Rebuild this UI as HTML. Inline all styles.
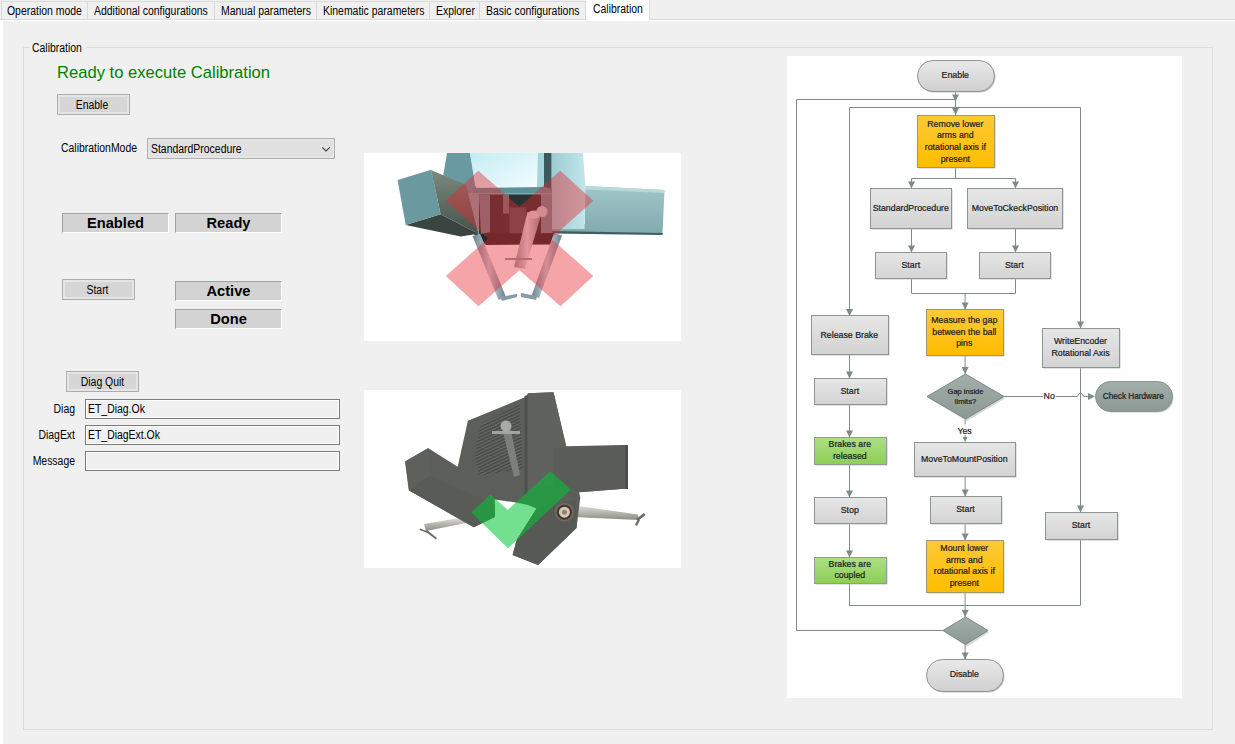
<!DOCTYPE html>
<html><head><meta charset="utf-8">
<style>
*{margin:0;padding:0;box-sizing:border-box}
html,body{width:1235px;height:744px;overflow:hidden;background:#f0f0f0;font-family:"Liberation Sans",sans-serif;color:#000}
.a{position:absolute}
.t{position:absolute;white-space:nowrap;font-size:12px;line-height:14px;transform:scaleX(.87);transform-origin:0 0}
.t[style*="center"]{transform-origin:50% 0}
.t[style*="right"]{transform-origin:100% 0}
.tab{position:absolute;top:1px;height:18px;border-top:1px solid #d9d9d9;border-left:1px solid #d9d9d9;background:#f0f0f0}
.btn{position:absolute;border:1px solid #adadad;background:#d6d6d6;box-shadow:inset 0 0 0 2px #e5e5e5}
.lbl3d{position:absolute;background:#d3d3d3;border-top:1px solid #a0a0a0;border-left:1px solid #a0a0a0;border-right:1px solid #fff;border-bottom:1px solid #fff;font-weight:bold;font-size:14.67px;text-align:center;line-height:19px}
.tb{position:absolute;left:85px;width:255px;height:20px;border:1px solid #7a7a7a;background:#f0f0f0;box-shadow:inset 0 0 0 1px #fff}
</style></head><body>
<!-- tabs -->
<div class="a" style="left:0;top:19px;width:1235px;height:1px;background:#d9d9d9"></div>
<div class="a" style="left:0;top:20px;width:1235px;height:1px;background:#fff"></div>
<div class="a" style="left:0;top:20px;width:3px;height:724px;background:#fff"></div>
<div class="tab" style="left:1px;width:87px"></div>
<div class="tab" style="left:87px;width:128px"></div>
<div class="tab" style="left:214px;width:103px"></div>
<div class="tab" style="left:316px;width:114px"></div>
<div class="tab" style="left:429px;width:51px"></div>
<div class="tab" style="left:479px;width:107px;border-right:1px solid #d9d9d9"></div>
<div class="a" style="left:649px;top:0;width:1px;height:19px;background:#d9d9d9"></div>
<div class="a" style="left:586px;top:0;width:63px;height:21px;background:#fff"></div>
<div class="t" style="left:7px;top:4px">Operation mode</div>
<div class="t" style="left:94px;top:4px">Additional configurations</div>
<div class="t" style="left:221px;top:4px">Manual parameters</div>
<div class="t" style="left:323px;top:4px">Kinematic parameters</div>
<div class="t" style="left:436px;top:4px">Explorer</div>
<div class="t" style="left:486px;top:4px">Basic configurations</div>
<div class="t" style="left:593px;top:2px">Calibration</div>

<!-- group box -->
<div class="a" style="left:23px;top:47px;width:1190px;height:683px;border:1px solid #dcdcdc"></div>
<div class="a" style="left:30px;top:40px;width:56px;height:14px;background:#f0f0f0"></div>
<div class="t" style="left:31.5px;top:41px">Calibration</div>

<div class="a" style="left:57px;top:63px;font-size:16.6px;color:#008000;white-space:nowrap;line-height:19px">Ready to execute Calibration</div>
<div class="btn" style="left:57px;top:94px;width:73px;height:21px"></div>
<div class="t" style="left:56px;top:98px;width:72px;text-align:center">Enable</div>

<div class="t" style="left:61px;top:141px">CalibrationMode</div>
<div class="a" style="left:147px;top:138px;width:188px;height:21px;border:1px solid #adadad;background:#e1e1e1;box-shadow:inset 0 0 0 1px #e8e8e8"></div>
<div class="t" style="left:151px;top:142px">StandardProcedure</div>
<svg class="a" style="left:318px;top:142px" width="16" height="12"><path d="M4.2 5.3 L8 8.9 L11.8 5.3" fill="none" stroke="#404040" stroke-width="1.1"/></svg>

<div class="lbl3d" style="left:62px;top:213px;width:107px;height:20px">Enabled</div>
<div class="lbl3d" style="left:175px;top:213px;width:107px;height:20px">Ready</div>

<div class="btn" style="left:62px;top:279px;width:73px;height:21px"></div>
<div class="t" style="left:61px;top:283px;width:73px;text-align:center">Start</div>
<div class="lbl3d" style="left:175px;top:281px;width:107px;height:20px">Active</div>
<div class="lbl3d" style="left:175px;top:309px;width:107px;height:20px">Done</div>

<div class="btn" style="left:66px;top:371px;width:73px;height:21px"></div>
<div class="t" style="left:65.5px;top:375px;width:73px;text-align:center">Diag Quit</div>
<div class="t" style="left:20px;top:402px;width:55px;text-align:right">Diag</div>
<div class="t" style="left:20px;top:428px;width:55px;text-align:right">DiagExt</div>
<div class="t" style="left:20px;top:454px;width:55px;text-align:right">Message</div>
<div class="tb" style="top:399px"></div>
<div class="tb" style="top:425px"></div>
<div class="tb" style="top:451px"></div>
<div class="t" style="left:88px;top:402px">ET_Diag.Ok</div>
<div class="t" style="left:88px;top:428px">ET_DiagExt.Ok</div>

<!-- images -->
<svg class="a" style="left:364px;top:153px" width="317" height="188" viewBox="364 153 317 188">
<defs>
<linearGradient id="i1win" x1="0" y1="0" x2="1" y2="1"><stop offset="0" stop-color="#c4ecf3"/><stop offset="1" stop-color="#f4fdff"/></linearGradient>
<linearGradient id="i1side" x1="0" y1="0" x2="0" y2="1"><stop offset="0" stop-color="#7c8a7f"/><stop offset="1" stop-color="#46524c"/></linearGradient>
<linearGradient id="i1ru" x1="0" y1="0" x2="1" y2="0"><stop offset="0" stop-color="#9ccbd1"/><stop offset="1" stop-color="#c2e6eb"/></linearGradient>
<linearGradient id="i1beam" x1="0" y1="0" x2="0" y2="1"><stop offset="0" stop-color="#9fc5c8"/><stop offset="1" stop-color="#82aaae"/></linearGradient>
<linearGradient id="i1leg" x1="0" y1="0" x2="1" y2="0"><stop offset="0" stop-color="#6c7f8a"/><stop offset=".5" stop-color="#c4d8e3"/><stop offset="1" stop-color="#6c7f8a"/></linearGradient>
<linearGradient id="i1rod" x1="0" y1="0" x2="1" y2="0"><stop offset="0" stop-color="#8f9aa2"/><stop offset=".5" stop-color="#e0e6ea"/><stop offset="1" stop-color="#8f9aa2"/></linearGradient>
</defs>
<rect x="364" y="153" width="317" height="188" fill="#fff"/>
<!-- left upright -->
<path d="M447 153 L470 153 L477 190 L466 202 L443 177 Z" fill="#6a9aa1"/>
<!-- right beam -->
<path d="M585 186 L664.5 190 L662.5 234 L552 232 L552 224 L585 224 Z" fill="url(#i1beam)"/>
<path d="M585 186 L664.5 190 L664.5 193 L585 189.5 Z" fill="#b8d8da"/>
<path d="M552 231 L662.5 233 L662.5 235 L552 233.5 Z" fill="#3e5d60"/>
<!-- right upright -->
<path d="M551.5 153 L583 153 L585.5 188 L584.5 229 L551.5 229 Z" fill="url(#i1ru)"/>
<rect x="544" y="153" width="7.5" height="77" fill="#3c5a5e"/>
<rect x="537" y="153" width="7" height="36" fill="#a5d4db"/>
<!-- window -->
<path d="M470 153 L538 153 L537 184 Q536 187.5 532 188 L481 189.5 Q476 189 475 185 Z" fill="url(#i1win)"/>
<!-- frame bar + cavity -->
<path d="M472 188 L544 187 L552 189 L552 195 L474 195.5 Z" fill="#5f9097"/>
<path d="M465 193 L552 193 L552 235 L476 235 Z" fill="#7fa8ad"/>
<path d="M479 194.5 L541 194.5 L541 241 L479 241 Z" fill="#283232"/>
<path d="M479 194.5 L490 194.5 L490 232 L481 234 Z" fill="#6a8a90"/>
<rect x="503" y="194.5" width="6" height="19" fill="#6a7a7c"/>
<rect x="509.5" y="207.5" width="16.5" height="27" fill="#4a5658"/>
<rect x="541" y="194.5" width="11" height="40" fill="#6d9096"/>
<path d="M474 234 L555 233 L552 244.5 L486 245 Z" fill="#232a2a"/>
<!-- left box -->
<path d="M431 170 L466 185 L478.3 233.7 L440.6 214.2 Z" fill="url(#i1side)"/>
<path d="M405.7 224.9 L440.6 214.2 L478.3 233.7 L460.8 236.4 Z" fill="#3a4541"/>
<path d="M397.6 180 L431.2 169.8 L440.6 214.2 L405.7 224.9 Z" fill="#6b99a0"/>
<!-- legs -->
<path d="M472.5 236 L480 233.5 L506 297 L498.5 300 Z" fill="url(#i1leg)"/>
<path d="M554 233 L562 235.5 L539 298 L531.5 296 Z" fill="url(#i1leg)"/>
<path d="M500 297 L517 294 L517 297 L502 301 Z" fill="#8a9aa6"/>
<path d="M537 296 L521 293 L521 297 L536 300 Z" fill="#8a9aa6"/>
<!-- center rod -->
<path d="M527.5 212 L540.5 217 L525 269 L514 267 Z" fill="url(#i1rod)"/>
<ellipse cx="534" cy="214.5" rx="6.5" ry="4" fill="#d8e0e4"/>
<circle cx="542" cy="211.5" r="5.5" fill="#c8d2d8"/>
<rect x="505" y="258" width="27" height="2" fill="#8e9ca6"/>
<!-- X overlay -->
<path d="M478.3 170.7 L519.3 206.8 L560.3 170.7 L593.3 200.7 L551 238.5 L593.3 275.9 L560.5 306.2 L519.5 270.2 L478.5 306.2 L445.9 275.9 L488 238.5 L445.6 200.7 Z" fill="rgba(232,38,45,.42)"/>
</svg>

<svg class="a" style="left:364px;top:390px" width="317" height="178" viewBox="364 390 317 178">
<defs>
<pattern id="i2mesh" width="3" height="3" patternUnits="userSpaceOnUse" patternTransform="rotate(-25)"><rect width="3" height="3" fill="#4b4f4c"/><rect width="3" height="1" fill="#6a6e6a"/></pattern>
<linearGradient id="i2rod" x1="0" y1="0" x2="0" y2="1"><stop offset="0" stop-color="#e2e2d8"/><stop offset="1" stop-color="#8c8c84"/></linearGradient>
</defs>
<rect x="364" y="390" width="317" height="178" fill="#fff"/>
<!-- rods -->
<path d="M424 524 L465 517 L466 523 L426 531 Z" fill="url(#i2rod)"/>
<path d="M420 528.5 L428 531.5 L427.5 533 L419.5 530 Z" fill="#6c6c66"/><path d="M427 530 L437 538 L436 539.5 L426 532 Z" fill="#6c6c66"/>
<path d="M572 505 L638 514.6 L639 520 L572 517 Z" fill="url(#i2rod)"/>
<rect x="570" y="504" width="5" height="14" fill="#3d3f3c"/>
<path d="M636 519 L644 513 L645.5 515 L638 521 Z" fill="#6c6c66"/><path d="M638 519 L635 525 L637 526 L640 520 Z" fill="#6c6c66"/>
<!-- body silhouette -->
<path d="M467.9 420.8 L526.7 396.5 L528 393.2 L553.5 392.2 L566.2 446.3 L625 445 L627.5 488.4 L579 492.3 L580.3 497.4 L576.5 528 L538.1 565 L512.6 554.9 L516.7 540 L536.5 508.6 L528 505 L515.8 502.5 L494.8 499.4 L494.8 517 L473.8 527.3 L409.1 490.4 L405.3 461.6 L428.3 448.3 L457.7 466.7 Z" fill="#5c5e59"/>
<!-- mesh -->
<path d="M480.7 424.3 L519.7 404.1 L522.4 468.7 L479.3 475.4 L474.6 454 Z" fill="url(#i2mesh)"/>
<!-- column -->
<path d="M528 393.2 L553.5 392.2 L566.2 446.3 L553.5 448.9 L553.5 483.4 L524.5 495 L524.5 400 Z" fill="#60625d"/>
<path d="M524.5 396 L527.5 395 L527.5 494 L524.5 495 Z" fill="#4e504c"/>
<!-- beam -->
<path d="M553.5 448.9 L625 445 L627.5 488.4 L579 492.3 L553.5 483.4 Z" fill="#5a5c57"/>
<rect x="625" y="445" width="3" height="44" fill="#4c4e49"/>
<!-- left block faces -->
<path d="M405.3 461.6 L428.3 448.3 L430 475.6 L409.1 490.4 Z" fill="#5e605b" stroke="#5e605b" stroke-width=".5"/>
<path d="M409.1 490.4 L430 475.6 L494.8 505 L494.8 517 L473.8 527.3 Z" fill="#595b56"/>
<!-- bottom block -->
<path d="M536.5 508.6 L576.5 500 L576.5 528 L538.1 565 L512.6 554.9 L516.7 540 Z" fill="#575954"/>
<!-- flange -->
<circle cx="564.4" cy="512.2" r="9.5" fill="#6a6a66"/>
<circle cx="564.4" cy="512.2" r="7.5" fill="#4a3322"/>
<circle cx="564.4" cy="512.2" r="5.5" fill="#d2cab6"/>
<circle cx="564.4" cy="512.2" r="2.5" fill="#8a8578"/>
<!-- center rod -->
<path d="M502 428 L510 426 L520 475 L514 477 Z" fill="#7d7f7a"/>
<rect x="492" y="431" width="28" height="3" fill="#9ea4a0"/>
<circle cx="506" cy="426" r="5.5" fill="#a5aba7"/>
<!-- check overlay -->
<path d="M471.2 512.5 L490.4 494.5 L507.9 509.9 L550.2 471.2 L571 489.5 L508 548.3 Z" fill="rgba(0,199,51,.55)"/>
</svg>

<!-- flowchart -->
<svg class="a" style="left:787px;top:56px" width="395" height="642" viewBox="787 56 395 642" font-family="Liberation Sans" font-size="8.8">
<defs>
<linearGradient id="gg" x1="0" y1="0" x2="0" y2="1"><stop offset="0" stop-color="#e6e6e6"/><stop offset="1" stop-color="#d3d3d3"/></linearGradient>
<linearGradient id="go" x1="0" y1="0" x2="0" y2="1"><stop offset="0" stop-color="#fdca35"/><stop offset="1" stop-color="#ffbd00"/></linearGradient>
<linearGradient id="gn" x1="0" y1="0" x2="0" y2="1"><stop offset="0" stop-color="#addf85"/><stop offset="1" stop-color="#8ccf55"/></linearGradient>
<linearGradient id="gd" x1="0" y1="0" x2="0" y2="1"><stop offset="0" stop-color="#a2aeaa"/><stop offset="1" stop-color="#8b9893"/></linearGradient>
<linearGradient id="gp" x1="0" y1="0" x2="0" y2="1"><stop offset="0" stop-color="#e9e9e9"/><stop offset="1" stop-color="#cfcfcf"/></linearGradient>
</defs>
<rect x="787" y="56" width="395" height="642" fill="#fff"/>
<path d="M955.5 91 L955.5 115" fill="none" stroke="#808b87" stroke-width="1"/>
<path d="M943 630.5 L796.5 630.5 L796.5 99.5 L955.5 99.5" fill="none" stroke="#808b87" stroke-width="1"/>
<path d="M849.5 316 L849.5 107.5 L1080.5 107.5 L1080.5 328" fill="none" stroke="#808b87" stroke-width="1"/>
<path d="M955.5 167 L955.5 178.5" fill="none" stroke="#808b87" stroke-width="1"/>
<path d="M911.5 188 L911.5 178.5 L1015.5 178.5 L1015.5 188" fill="none" stroke="#808b87" stroke-width="1"/>
<path d="M911.5 229 L911.5 252" fill="none" stroke="#808b87" stroke-width="1"/>
<path d="M1015.5 229 L1015.5 252" fill="none" stroke="#808b87" stroke-width="1"/>
<path d="M911.5 278 L911.5 293.5 L1015.5 293.5 L1015.5 278" fill="none" stroke="#808b87" stroke-width="1"/>
<path d="M965.1 293.5 L965.1 309" fill="none" stroke="#808b87" stroke-width="1"/>
<path d="M965.1 355 L965.1 374" fill="none" stroke="#808b87" stroke-width="1"/>
<path d="M965.1 419 L965.1 424.5" fill="none" stroke="#808b87" stroke-width="1"/>
<path d="M965.1 435 L965.1 437" fill="none" stroke="#808b87" stroke-width="1"/>
<path d="M965.1 476 L965.1 496" fill="none" stroke="#808b87" stroke-width="1"/>
<path d="M965.1 523 L965.1 540" fill="none" stroke="#808b87" stroke-width="1"/>
<path d="M965.1 592 L965.1 617" fill="none" stroke="#808b87" stroke-width="1"/>
<path d="M965.1 644 L965.1 659" fill="none" stroke="#808b87" stroke-width="1"/>
<path d="M849.5 354 L849.5 378" fill="none" stroke="#808b87" stroke-width="1"/>
<path d="M849.5 404 L849.5 437" fill="none" stroke="#808b87" stroke-width="1"/>
<path d="M849.5 464 L849.5 497" fill="none" stroke="#808b87" stroke-width="1"/>
<path d="M849.5 523 L849.5 557" fill="none" stroke="#808b87" stroke-width="1"/>
<path d="M849.5 583 L849.5 605.5 L1080.5 605.5 L1080.5 539" fill="none" stroke="#808b87" stroke-width="1"/>
<path d="M1080.5 367 L1080.5 512" fill="none" stroke="#808b87" stroke-width="1"/>
<path d="M1003 396.5 L1043 396.5" fill="none" stroke="#808b87" stroke-width="1"/>
<path d="M1055.5 396.5 L1077 396.5" fill="none" stroke="#808b87" stroke-width="1"/>
<path d="M1077 396.5 C1078.5 396.5 1078 393 1080.5 393 C1083 393 1082.5 396.5 1084 396.5" fill="none" stroke="#808b87"/>
<path d="M1084 396.5 L1090 396.5" fill="none" stroke="#808b87" stroke-width="1"/>
<path d="M952.0 94.5 L959.0 94.5 L955.5 101.5 Z" fill="#808b87"/>
<path d="M952.0 108 L959.0 108 L955.5 115 Z" fill="#808b87"/>
<path d="M908.0 181.5 L915.0 181.5 L911.5 188.5 Z" fill="#808b87"/>
<path d="M1012.0 181.5 L1019.0 181.5 L1015.5 188.5 Z" fill="#808b87"/>
<path d="M908.0 245.5 L915.0 245.5 L911.5 252.5 Z" fill="#808b87"/>
<path d="M1012.0 245.5 L1019.0 245.5 L1015.5 252.5 Z" fill="#808b87"/>
<path d="M961.6 302.5 L968.6 302.5 L965.1 309.5 Z" fill="#808b87"/>
<path d="M961.6 367 L968.6 367 L965.1 374 Z" fill="#808b87"/>
<path d="M962.6 437 L967.6 437 L965.1 442 Z" fill="#808b87"/>
<path d="M961.6 489.5 L968.6 489.5 L965.1 496.5 Z" fill="#808b87"/>
<path d="M961.6 533.5 L968.6 533.5 L965.1 540.5 Z" fill="#808b87"/>
<path d="M961.6 610 L968.6 610 L965.1 617 Z" fill="#808b87"/>
<path d="M961.6 652.5 L968.6 652.5 L965.1 659.5 Z" fill="#808b87"/>
<path d="M846.0 309 L853.0 309 L849.5 316 Z" fill="#808b87"/>
<path d="M846.0 371.5 L853.0 371.5 L849.5 378.5 Z" fill="#808b87"/>
<path d="M846.0 430.5 L853.0 430.5 L849.5 437.5 Z" fill="#808b87"/>
<path d="M846.0 490.5 L853.0 490.5 L849.5 497.5 Z" fill="#808b87"/>
<path d="M846.0 550.5 L853.0 550.5 L849.5 557.5 Z" fill="#808b87"/>
<path d="M1077.0 321.5 L1084.0 321.5 L1080.5 328.5 Z" fill="#808b87"/>
<path d="M1077.0 505.5 L1084.0 505.5 L1080.5 512.5 Z" fill="#808b87"/>
<path d="M1088 393.0 L1088 400.0 L1095 396.5 Z" fill="#808b87"/>
<rect x="918.5" y="61.5" width="77" height="31" rx="15.5" fill="#b4bab7" opacity=".8"/>
<rect x="917.5" y="60.5" width="77" height="31" rx="15.5" fill="url(#gp)" stroke="#8b9591" stroke-width="1"/>
<text x="955.3" y="78.1" text-anchor="middle" fill="#1a1a1a" stroke="#1a1a1a" stroke-width=".2">Enable</text>
<rect x="918.5" y="116.5" width="77" height="52" rx="0" fill="#b4bab7" opacity=".8"/>
<rect x="917.5" y="115.5" width="77" height="52" rx="0" fill="url(#go)" stroke="#a0976a" stroke-width="1"/>
<text x="955.3" y="126.55" text-anchor="middle" fill="#1a1a1a" stroke="#1a1a1a" stroke-width=".2">Remove lower</text>
<text x="955.3" y="138.25" text-anchor="middle" fill="#1a1a1a" stroke="#1a1a1a" stroke-width=".2">arms and</text>
<text x="955.3" y="149.95" text-anchor="middle" fill="#1a1a1a" stroke="#1a1a1a" stroke-width=".2">rotational axis if</text>
<text x="955.3" y="161.65" text-anchor="middle" fill="#1a1a1a" stroke="#1a1a1a" stroke-width=".2">present</text>
<rect x="871.5" y="189.5" width="81" height="40" rx="0" fill="#b4bab7" opacity=".8"/>
<rect x="870.5" y="188.5" width="81" height="40" rx="0" fill="url(#gg)" stroke="#8b9591" stroke-width="1"/>
<text x="910.8" y="210.6" text-anchor="middle" fill="#1a1a1a" stroke="#1a1a1a" stroke-width=".2">StandardProcedure</text>
<rect x="968.5" y="189.5" width="95" height="40" rx="0" fill="#b4bab7" opacity=".8"/>
<rect x="967.5" y="188.5" width="95" height="40" rx="0" fill="url(#gg)" stroke="#8b9591" stroke-width="1"/>
<text x="1015" y="210.6" text-anchor="middle" fill="#1a1a1a" stroke="#1a1a1a" stroke-width=".2">MoveToCkeckPosition</text>
<rect x="876.5" y="253.5" width="71" height="26" rx="0" fill="#b4bab7" opacity=".8"/>
<rect x="875.5" y="252.5" width="71" height="26" rx="0" fill="url(#gg)" stroke="#8b9591" stroke-width="1"/>
<text x="910.8" y="267.6" text-anchor="middle" fill="#1a1a1a" stroke="#1a1a1a" stroke-width=".2">Start</text>
<rect x="980.5" y="253.5" width="71" height="26" rx="0" fill="#b4bab7" opacity=".8"/>
<rect x="979.5" y="252.5" width="71" height="26" rx="0" fill="url(#gg)" stroke="#8b9591" stroke-width="1"/>
<text x="1014.3" y="267.6" text-anchor="middle" fill="#1a1a1a" stroke="#1a1a1a" stroke-width=".2">Start</text>
<rect x="927.5" y="310.5" width="77" height="46" rx="0" fill="#b4bab7" opacity=".8"/>
<rect x="926.5" y="309.5" width="77" height="46" rx="0" fill="url(#go)" stroke="#a0976a" stroke-width="1"/>
<text x="964.3" y="322.90000000000003" text-anchor="middle" fill="#1a1a1a" stroke="#1a1a1a" stroke-width=".2">Measure the gap</text>
<text x="964.3" y="334.6" text-anchor="middle" fill="#1a1a1a" stroke="#1a1a1a" stroke-width=".2">between the ball</text>
<text x="964.3" y="346.3" text-anchor="middle" fill="#1a1a1a" stroke="#1a1a1a" stroke-width=".2">pins</text>
<path d="M929 398.5 L967 376 L1005 398.5 L967 421 Z" fill="#c4c8c6" opacity=".7"/>
<path d="M927 396.5 L965.5 374 L1004 396.5 L965.5 419 Z" fill="url(#gd)" stroke="#7d8985"/>
<text x="965.5" y="393.85" text-anchor="middle" fill="#1a1a1a" stroke="#1a1a1a" stroke-width=".2" font-size="7.5">Gap inside</text>
<text x="965.5" y="404.35" text-anchor="middle" fill="#1a1a1a" stroke="#1a1a1a" stroke-width=".2" font-size="7.5">limits?</text>
<text x="1049.2" y="399" text-anchor="middle" fill="#1a1a1a" stroke="#1a1a1a" stroke-width=".2">No</text>
<text x="964.6" y="433.5" text-anchor="middle" fill="#1a1a1a" stroke="#1a1a1a" stroke-width=".2">Yes</text>
<rect x="1096.5" y="382.5" width="77" height="30" rx="15" fill="#b4bab7" opacity=".8"/>
<rect x="1095.5" y="381.5" width="77" height="30" rx="15" fill="url(#gd)" stroke="#8b9591" stroke-width="1"/>
<text x="1133.3" y="398.6" text-anchor="middle" fill="#1a1a1a" stroke="#1a1a1a" stroke-width=".2" font-size="8.2">Check Hardware</text>
<rect x="915.5" y="443.5" width="101" height="34" rx="0" fill="#b4bab7" opacity=".8"/>
<rect x="914.5" y="442.5" width="101" height="34" rx="0" fill="url(#gg)" stroke="#8b9591" stroke-width="1"/>
<text x="964.3" y="461.6" text-anchor="middle" fill="#1a1a1a" stroke="#1a1a1a" stroke-width=".2">MoveToMountPosition</text>
<rect x="931.5" y="497.5" width="71" height="27" rx="0" fill="#b4bab7" opacity=".8"/>
<rect x="930.5" y="496.5" width="71" height="27" rx="0" fill="url(#gg)" stroke="#8b9591" stroke-width="1"/>
<text x="965.5" y="512.1" text-anchor="middle" fill="#1a1a1a" stroke="#1a1a1a" stroke-width=".2">Start</text>
<rect x="927.5" y="541.5" width="77" height="52" rx="0" fill="#b4bab7" opacity=".8"/>
<rect x="926.5" y="540.5" width="77" height="52" rx="0" fill="url(#go)" stroke="#a0976a" stroke-width="1"/>
<text x="964.3" y="551.0500000000001" text-anchor="middle" fill="#1a1a1a" stroke="#1a1a1a" stroke-width=".2">Mount lower</text>
<text x="964.3" y="562.7500000000001" text-anchor="middle" fill="#1a1a1a" stroke="#1a1a1a" stroke-width=".2">arms and</text>
<text x="964.3" y="574.45" text-anchor="middle" fill="#1a1a1a" stroke="#1a1a1a" stroke-width=".2">rotational axis if</text>
<text x="964.3" y="586.1500000000001" text-anchor="middle" fill="#1a1a1a" stroke="#1a1a1a" stroke-width=".2">present</text>
<path d="M945 632.5 L967 619 L989 632.5 L967 646.5 Z" fill="#c4c8c6" opacity=".7"/>
<path d="M943 630.5 L965.5 617 L988 630.5 L965.5 644.5 Z" fill="url(#gd)" stroke="#7d8985"/>
<rect x="927.5" y="660.5" width="77" height="32" rx="16" fill="#b4bab7" opacity=".8"/>
<rect x="926.5" y="659.5" width="77" height="32" rx="16" fill="url(#gp)" stroke="#8b9591" stroke-width="1"/>
<text x="964.3" y="676.9" text-anchor="middle" fill="#1a1a1a" stroke="#1a1a1a" stroke-width=".2">Disable</text>
<rect x="812.5" y="316.5" width="77" height="39" rx="0" fill="#b4bab7" opacity=".8"/>
<rect x="811.5" y="315.5" width="77" height="39" rx="0" fill="url(#gg)" stroke="#8b9591" stroke-width="1"/>
<text x="849.3" y="337.6" text-anchor="middle" fill="#1a1a1a" stroke="#1a1a1a" stroke-width=".2">Release Brake</text>
<rect x="815.5" y="379.5" width="72" height="26" rx="0" fill="#b4bab7" opacity=".8"/>
<rect x="814.5" y="378.5" width="72" height="26" rx="0" fill="url(#gg)" stroke="#8b9591" stroke-width="1"/>
<text x="849.8" y="393.6" text-anchor="middle" fill="#1a1a1a" stroke="#1a1a1a" stroke-width=".2">Start</text>
<rect x="815.5" y="438.5" width="72" height="27" rx="0" fill="#b4bab7" opacity=".8"/>
<rect x="814.5" y="437.5" width="72" height="27" rx="0" fill="url(#gn)" stroke="#939b96" stroke-width="1"/>
<text x="849.8" y="447.25" text-anchor="middle" fill="#1a1a1a" stroke="#1a1a1a" stroke-width=".2">Brakes are</text>
<text x="849.8" y="458.95" text-anchor="middle" fill="#1a1a1a" stroke="#1a1a1a" stroke-width=".2">released</text>
<rect x="815.5" y="498.5" width="72" height="26" rx="0" fill="#b4bab7" opacity=".8"/>
<rect x="814.5" y="497.5" width="72" height="26" rx="0" fill="url(#gg)" stroke="#8b9591" stroke-width="1"/>
<text x="849.8" y="512.6" text-anchor="middle" fill="#1a1a1a" stroke="#1a1a1a" stroke-width=".2">Stop</text>
<rect x="815.5" y="558.5" width="72" height="26" rx="0" fill="#b4bab7" opacity=".8"/>
<rect x="814.5" y="557.5" width="72" height="26" rx="0" fill="url(#gn)" stroke="#939b96" stroke-width="1"/>
<text x="849.8" y="566.75" text-anchor="middle" fill="#1a1a1a" stroke="#1a1a1a" stroke-width=".2">Brakes are</text>
<text x="849.8" y="578.45" text-anchor="middle" fill="#1a1a1a" stroke="#1a1a1a" stroke-width=".2">coupled</text>
<rect x="1043.5" y="329.5" width="77" height="39" rx="0" fill="#b4bab7" opacity=".8"/>
<rect x="1042.5" y="328.5" width="77" height="39" rx="0" fill="url(#gg)" stroke="#8b9591" stroke-width="1"/>
<text x="1080.5" y="344.25" text-anchor="middle" fill="#1a1a1a" stroke="#1a1a1a" stroke-width=".2">WriteEncoder</text>
<text x="1080.5" y="355.95" text-anchor="middle" fill="#1a1a1a" stroke="#1a1a1a" stroke-width=".2">Rotational Axis</text>
<rect x="1046.5" y="513.5" width="72" height="27" rx="0" fill="#b4bab7" opacity=".8"/>
<rect x="1045.5" y="512.5" width="72" height="27" rx="0" fill="url(#gg)" stroke="#8b9591" stroke-width="1"/>
<text x="1081" y="528.1" text-anchor="middle" fill="#1a1a1a" stroke="#1a1a1a" stroke-width=".2">Start</text>
</svg>
</body></html>
